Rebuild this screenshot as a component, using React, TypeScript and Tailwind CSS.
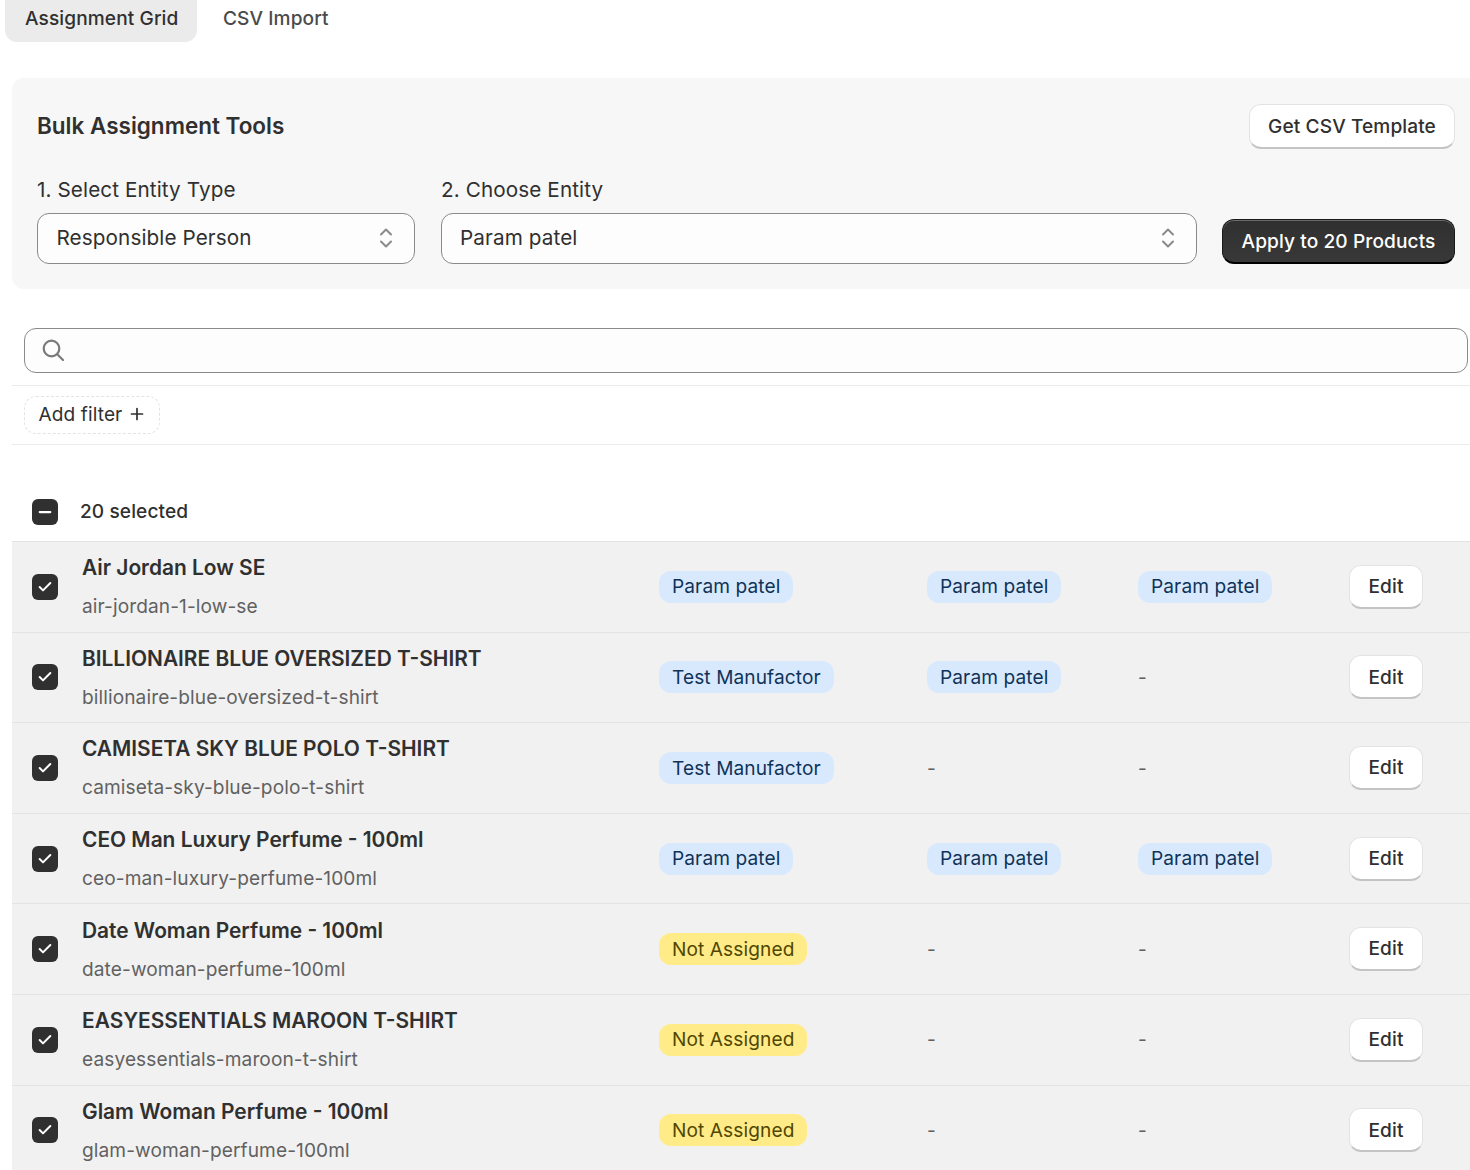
import { Check, Minus } from "lucide-react";

type Tag = "Param patel" | "Test Manufactor" | "Not Assigned" | "-";

const rows: { name: string; slug: string; tags: [Tag, Tag, Tag] }[] = [
  { name: "Air Jordan Low SE", slug: "air-jordan-1-low-se", tags: ["Param patel", "Param patel", "Param patel"] },
  { name: "BILLIONAIRE BLUE OVERSIZED T-SHIRT", slug: "billionaire-blue-oversized-t-shirt", tags: ["Test Manufactor", "Param patel", "-"] },
  { name: "CAMISETA SKY BLUE POLO T-SHIRT", slug: "camiseta-sky-blue-polo-t-shirt", tags: ["Test Manufactor", "-", "-"] },
  { name: "CEO Man Luxury Perfume - 100ml", slug: "ceo-man-luxury-perfume-100ml", tags: ["Param patel", "Param patel", "Param patel"] },
  { name: "Date Woman Perfume - 100ml", slug: "date-woman-perfume-100ml", tags: ["Not Assigned", "-", "-"] },
  { name: "EASYESSENTIALS MAROON T-SHIRT", slug: "easyessentials-maroon-t-shirt", tags: ["Not Assigned", "-", "-"] },
  { name: "Glam Woman Perfume - 100ml", slug: "glam-woman-perfume-100ml", tags: ["Not Assigned", "-", "-"] },
];

const UpDown = () => (
  <svg width="14" height="22" viewBox="0 0 14 22" fill="none" stroke="#8a8a8a" strokeWidth="2" strokeLinecap="round" strokeLinejoin="round">
    <path d="M2 7.5 7 2.5l5 5" />
    <path d="M2 14.5l5 5 5-5" />
  </svg>
);

const TagCell = ({ tag }: { tag: Tag }) => {
  if (tag === "-") return <span className="text-[#616161]">-</span>;
  if (tag === "Not Assigned") {
    return <span className="inline-flex h-8 items-center rounded-[12px] bg-[#ffeb88] px-[13px] text-[#4f4700]">{tag}</span>;
  }
  return <span className="inline-flex h-8 items-center rounded-[12px] bg-[#d9e9fd] px-[13px] text-[#0f3358]">{tag}</span>;
};

const App = () => {
  return (
    <div className="h-[1170px] overflow-hidden bg-white font-['Inter',sans-serif] text-[19.1px] tracking-[0.1px] text-[#303030]">
      <div className="flex gap-[6px] pl-[5px]">
        <div className="flex h-[42px] items-center rounded-b-[12px] bg-[#ebebeb] pr-[18.5px] pb-[6px] pl-5 font-medium">Assignment Grid</div>
        <div className="flex h-[42px] items-center px-5 pb-[6px] font-medium text-[#4a4a4a]">CSV Import</div>
      </div>

      <div className="mt-[36px] ml-3 h-[211px] rounded-l-[12px] bg-[#f7f7f7] pt-[26px] pr-[15px] pl-[25px]">
        <div className="flex h-[44px] items-center justify-between">
          <h2 className="text-[22.5px] font-semibold tracking-normal">Bulk Assignment Tools</h2>
          <button className="h-[45px] w-[206px] rounded-[12px] border border-[#e3e3e3] border-b-2 border-b-[#c4c4c4] bg-white pt-[2px] font-medium">Get CSV Template</button>
        </div>
        <div className="mt-[29px] flex items-end gap-[26px] text-[20.7px]">
          <div className="w-[378px] shrink-0">
            <label className="block leading-[25px]">1. Select Entity Type</label>
            <div className="mt-[11px] flex h-[51px] items-center justify-between rounded-[12px] border border-[#8a8a8a] bg-[#fdfdfd] pr-[21px] pb-[2px] pl-[18.5px]">
              Responsible Person
              <UpDown />
            </div>
          </div>
          <div className="w-[756px] shrink-0">
            <label className="block leading-[25px]">2. Choose Entity</label>
            <div className="mt-[11px] flex h-[51px] items-center justify-between rounded-[12px] border border-[#8a8a8a] bg-[#fdfdfd] pr-[21px] pb-[2px] pl-[18px]">
              Param patel
              <UpDown />
            </div>
          </div>
          <button className="-ml-px h-[45px] w-[233px] shrink-0 rounded-[12px] border border-[#1a1a1a] border-b-2 border-b-black bg-linear-to-b from-[#303030] to-[#383838] text-[19.1px] font-medium text-white shadow-[inset_0_1px_0_#6a6a6a]">
            Apply to 20 Products
          </button>
        </div>
      </div>

      <div className="mt-[39px] ml-6 flex h-[45px] w-[1444px] items-center rounded-[12px] border border-[#8a8a8a] bg-[#fdfdfd] pl-[17px]">
        <svg width="22" height="22" viewBox="0 0 22 22" fill="none" stroke="#7a7a7a" strokeWidth="2.2" strokeLinecap="round" className="-mt-[2px]">
          <circle cx="9.5" cy="9.5" r="7.8" />
          <path d="M15.5 15.5 21 21" />
        </svg>
      </div>

      <div className="mt-3 ml-3 border-y border-[#ebebeb] py-[10px] pl-3">
        <button className="flex h-[38px] w-[136px] items-center gap-[8px] rounded-[12px] border border-dashed border-[#e3e3e3] pb-[2px] pl-[13.5px]">
          Add filter
          <svg width="14" height="14" viewBox="0 0 14 14" fill="none" stroke="#303030" strokeWidth="1.7" strokeLinecap="round">
            <path d="M7 1.5v11M1.5 7h11" />
          </svg>
        </button>
      </div>

      <div className="ml-3 flex h-[96px] items-center pt-[37px] pl-5">
        <span className="flex h-[26px] w-[26px] items-center justify-center rounded-[6px] bg-[#303030] text-white">
          <Minus size={18} strokeWidth={3} />
        </span>
        <span className="ml-[22px] font-medium">20 selected</span>
      </div>

      <div className="ml-3">
        {rows.map((row) => (
          <div
            key={row.slug}
            className="grid h-[90.6px] grid-cols-[70px_577px_268px_211px_212px_120px] items-center border-t border-[#e3e3e3] bg-[#f1f1f1]"
          >
            <span className="ml-5 flex h-[26px] w-[26px] items-center justify-center rounded-[6px] bg-[#303030] text-white">
              <Check size={16} strokeWidth={3} />
            </span>
            <div className="flex flex-col gap-[14px]">
              <span className="text-[20.9px] leading-[25px] font-semibold tracking-normal">{row.name}</span>
              <span className="leading-[24px] text-[#616161]">{row.slug}</span>
            </div>
            <div><TagCell tag={row.tags[0]} /></div>
            <div><TagCell tag={row.tags[1]} /></div>
            <div><TagCell tag={row.tags[2]} /></div>
            <button className="-ml-px h-[44px] w-[74px] rounded-[12px] border border-[#e3e3e3] border-b-2 border-b-[#c4c4c4] bg-white font-medium">Edit</button>
          </div>
        ))}
      </div>
    </div>
  );
};

export default App;
